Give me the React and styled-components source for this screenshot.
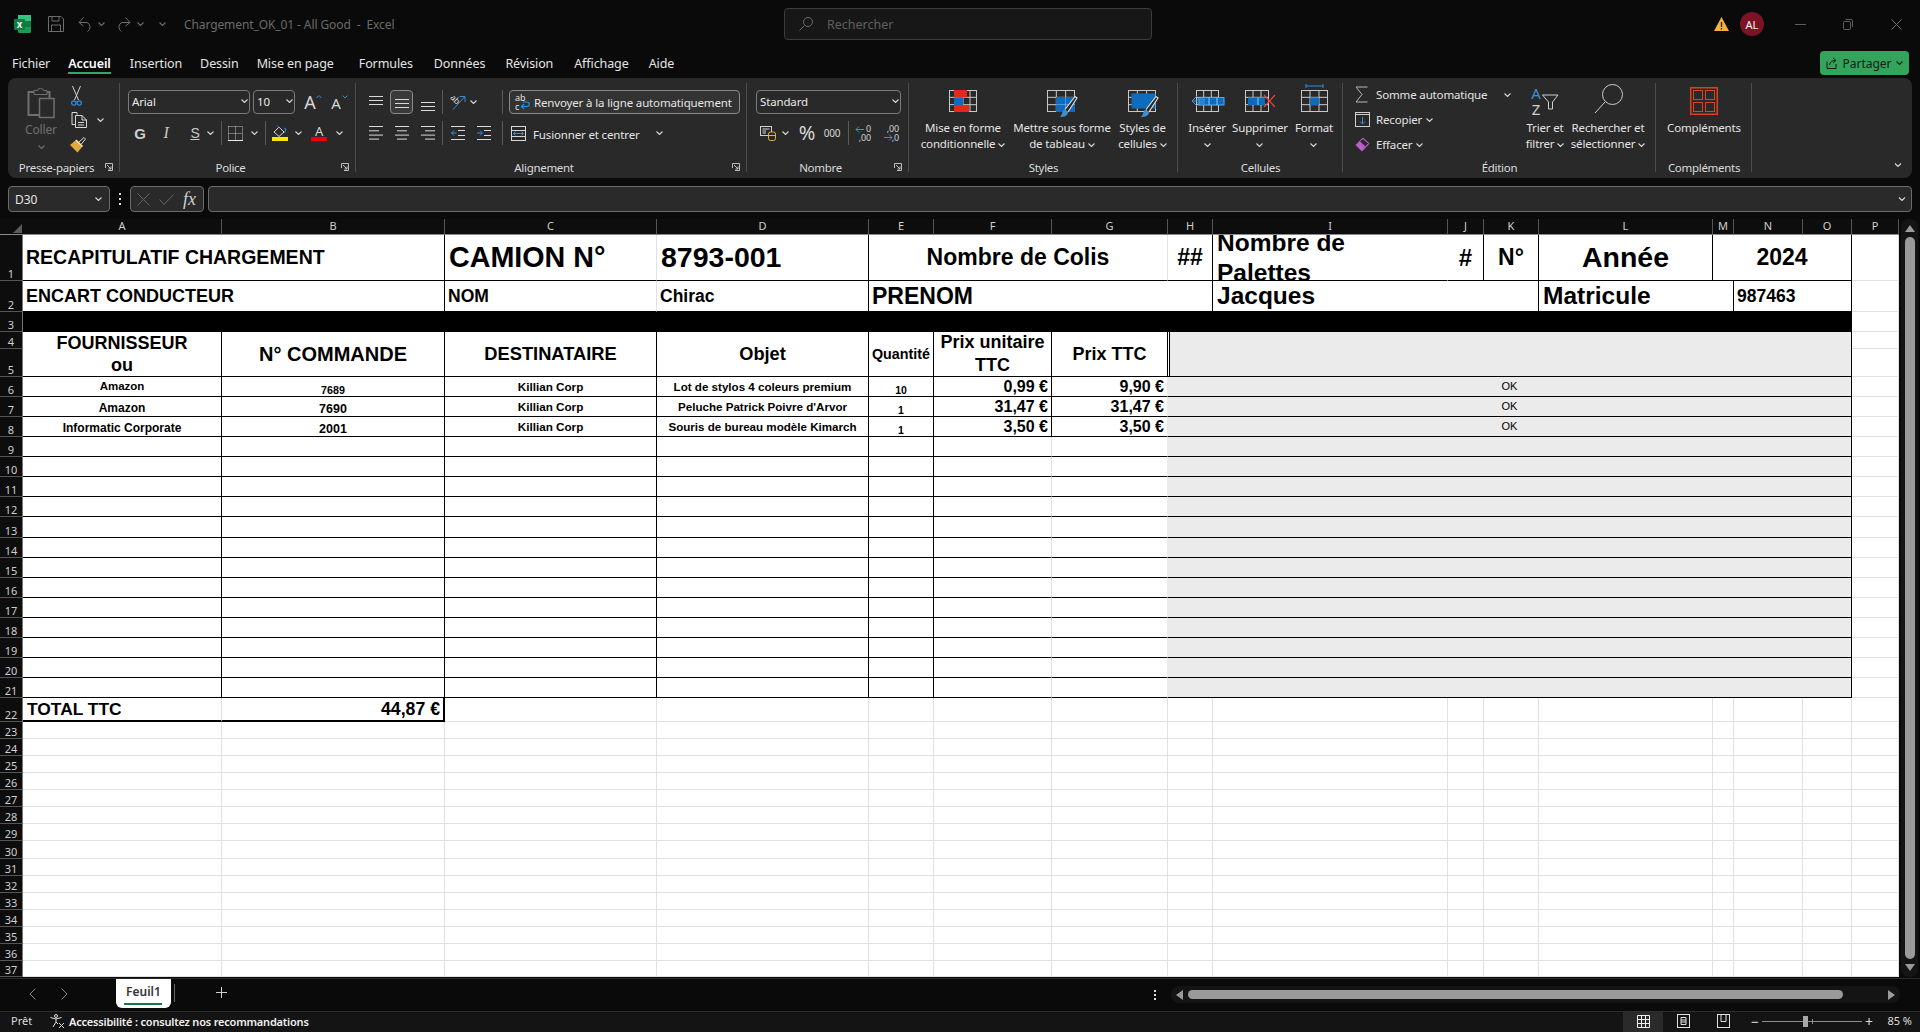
import React from "react";
import styled, { createGlobalStyle } from "styled-components";

const UI = '"Noto Sans", "Open Sans", sans-serif';
const BLACK = "#000";
const LIGHT = "#e1e1e1";
const WHITE = "#fff";
const GREY = "#ebebeb";
const ICON = "#d6d6d6";
const BLUE = "#2f8fe0";
const FILL = "#0f6cbd";

const GlobalStyle = createGlobalStyle`
  html, body { margin: 0; padding: 0; background: #0a0a0a; }
  * { box-sizing: border-box; }
`;

const Page = styled.div`
  position: relative;
  width: 1920px;
  height: 1032px;
  display: flex;
  flex-direction: column;
  overflow: hidden;
  background: #0a0a0a;
  font-family: ${UI};
  color: #e4e4e4;
`;

/* title bar */
const TitleBar = styled.div`
  height: 48px;
  flex: none;
  display: flex;
  align-items: center;
  padding-left: 14px;
`;
const QuickIcon = styled.span`
  width: ${(p) => p.$w}px;
  margin-left: ${(p) => p.$ml || 0}px;
  display: flex;
  justify-content: center;
  align-items: center;
  flex: none;
`;
const DocTitle = styled.span`
  margin-left: 18px;
  width: 600px;
  flex: none;
  font-size: 12px;
  letter-spacing: -0.1px;
  color: #6a6a6a;
  white-space: pre;
`;
const SearchBox = styled.div`
  width: 368px;
  height: 32px;
  flex: none;
  display: flex;
  align-items: center;
  gap: 14px;
  padding-left: 14px;
  background: #171717;
  border: 1px solid #3c3c3c;
  border-radius: 4px;
  font-size: 12.5px;
  color: #5f5f5f;
`;
const TitleRight = styled.div`
  flex: 1;
  display: flex;
  align-items: center;
  justify-content: flex-end;
`;
const Avatar = styled.span`
  width: 24px;
  height: 24px;
  margin: 0 12px 0 11px;
  border-radius: 50%;
  background: #7c1224;
  color: #f4f4f4;
  font-size: 11px;
  display: flex;
  align-items: center;
  justify-content: center;
`;
const WindowBtn = styled.span`
  width: 48px;
  display: flex;
  justify-content: center;
`;

/* menu */
const MenuBar = styled.div`
  height: 30px;
  flex: none;
  display: flex;
  align-items: flex-start;
  padding: 0 12px;
`;
const MenuTab = styled.span`
  position: relative;
  margin-right: ${(p) => p.$mr}px;
  font-size: 12.5px;
  line-height: 31px;
  font-weight: ${(p) => (p.$active ? 600 : 400)};
  letter-spacing: -0.1px;
  color: ${(p) => (p.$active ? "#fff" : "#e4e4e4")};
  ${(p) =>
    p.$active &&
    `&::after { content: ""; position: absolute; left: 0; right: 0; top: 24px; height: 2px; background: #33a866; }`}
`;
const ShareBtn = styled.div`
  margin-left: auto;
  margin-top: 3px;
  margin-right: -1px;
  width: 89px;
  height: 24px;
  display: flex;
  align-items: center;
  justify-content: center;
  gap: 4px;
  background: #34a35c;
  border-radius: 4px;
  color: #102016;
  font-size: 12px;
`;

/* ribbon */
const Ribbon = styled.div`
  height: 100px;
  flex: none;
  margin: 0 8px;
  display: flex;
  background: #292929;
  border-radius: 8px;
  font-size: 11.5px;
  letter-spacing: -0.15px;
`;
const Group = styled.div`
  position: relative;
  width: ${(p) => p.$w}px;
  height: 100px;
  flex: none;
  &::after {
    content: "";
    position: absolute;
    right: 0;
    top: 5px;
    bottom: 6px;
    width: 1px;
    background: #4c4c4c;
  }
`;
const GroupBody = styled.div`
  height: 79px;
  padding-left: ${(p) => p.$pl || 0}px;
  padding-top: ${(p) => p.$pt ?? 12}px;
  display: flex;
  flex-direction: ${(p) => (p.$row ? "row" : "column")};
  gap: ${(p) => (p.$row ? 0 : 7)}px;
`;
const GroupFoot = styled.div`
  height: 20px;
  display: flex;
  align-items: center;
  font-size: 11.5px;
  letter-spacing: -0.3px;
  color: #dcdcdc;
`;
const FootLabel = styled.span`
  flex: 1;
  text-align: center;
`;
const Launcher = styled.span`
  width: 15px;
  flex: none;
  display: flex;
  align-items: center;
`;
const ToolRow = styled.div`
  height: 24px;
  display: flex;
  align-items: center;
`;
const Slot = styled.span`
  width: ${(p) => p.$w}px;
  margin-left: ${(p) => p.$ml || 0}px;
  flex: none;
  height: 24px;
  display: flex;
  align-items: center;
  justify-content: center;
  color: ${ICON};
  ${(p) => p.$boxed && `border: 1px solid #8a8a8a; border-radius: 4px; background: #3a3a3a;`}
`;
const RowSep = styled.span`
  width: 1px;
  height: 24px;
  margin-left: ${(p) => p.$ml || 0}px;
  flex: none;
  background: #5a5a5a;
`;
const Select = styled.div`
  width: ${(p) => p.$w}px;
  height: 24px;
  margin-left: ${(p) => p.$ml || 0}px;
  flex: none;
  display: flex;
  align-items: center;
  justify-content: space-between;
  padding: 0 1px 2px 3px;
  border: 1px solid #7a7a7a;
  border-radius: 4px;
  font-size: 11.5px;
  color: #e8e8e8;
`;
const WrapBtn = styled.div`
  width: 231px;
  height: 24px;
  margin-left: 6px;
  flex: none;
  display: flex;
  align-items: center;
  gap: 4px;
  padding-left: 5px;
  border: 1px solid #8a8a8a;
  border-radius: 4px;
  background: #333;
  font-size: 11.5px;
  white-space: nowrap;
`;
const MergeBtn = styled.div`
  width: 160px;
  height: 24px;
  margin-left: 8px;
  flex: none;
  display: flex;
  align-items: center;
  font-size: 11.5px;
  white-space: nowrap;
`;
const MergeText = styled.span`
  margin-left: 7px;
  margin-top: 2px;
  width: 123px;
  flex: none;
`;
const PasteCol = styled.div`
  width: 58px;
  flex: none;
  display: flex;
  flex-direction: column;
  align-items: center;
  padding-top: 10px;
  color: #6f6f6f;
  font-size: 12px;
`;
const PasteLabel = styled.span`
  margin-top: 4px;
  line-height: 16px;
`;
const PasteChevron = styled.span`
  margin-top: 5px;
  line-height: 6px;
`;
const ClipCol = styled.div`
  display: flex;
  flex-direction: column;
  align-items: flex-start;
  padding-top: 6px;
`;
const ClipRow = styled.div`
  height: 25px;
  display: flex;
  align-items: center;
  gap: 10px;
  padding-left: 1px;
`;
const LargeBtn = styled.div`
  width: ${(p) => p.$w}px;
  flex: none;
  display: flex;
  flex-direction: column;
  align-items: center;
  text-align: center;
`;
const LargeIcon = styled.div`
  height: 42px;
  padding-top: ${(p) => p.$pt ?? 12}px;
  display: flex;
  justify-content: center;
`;
const LargeText = styled.div`
  line-height: 16px;
  white-space: nowrap;
  font-size: 11.5px;
`;
const EditCol = styled.div`
  width: 160px;
  flex: none;
  margin-left: 12px;
  display: flex;
  flex-direction: column;
  padding-top: 4px;
`;
const EditRow = styled.div`
  height: 26px;
  display: flex;
  align-items: center;
  font-size: 11.5px;
`;
const EditIcon = styled.span`
  width: 21px;
  flex: none;
  display: flex;
  align-items: center;
`;
const EditChevron = styled.span`
  margin-left: ${(p) => p.$ml || 4}px;
  display: flex;
`;
const RibbonTail = styled.div`
  flex: 1;
  display: flex;
  align-items: flex-end;
  justify-content: flex-end;
  padding: 0 9px 11px 0;
`;
const GlyphG = styled.span`
  font: bold 15px "Liberation Sans", sans-serif;
  color: #cfcfcf;
`;
const GlyphI = styled.span`
  font: italic 16px "Liberation Serif", serif;
  color: #c8c8c8;
`;
const GlyphS = styled.span`
  font: 14px "Liberation Sans", sans-serif;
  text-decoration: underline;
  color: #c8c8c8;
`;
const GlyphBig = styled.span`
  font-size: ${(p) => p.$s}px;
  font-family: ${UI};
  color: ${ICON};
  line-height: 1;
`;

/* formula bar */
const FormulaRow = styled.div`
  height: 41px;
  flex: none;
  padding: 8px 8px 7px;
  display: flex;
  align-items: stretch;
`;
const NameBox = styled.div`
  width: 102px;
  flex: none;
  display: flex;
  align-items: center;
  justify-content: space-between;
  padding: 0 6px;
  background: #2a2a2a;
  border: 1px solid #6a6a6a;
  border-radius: 4px;
  font-size: 12px;
`;
const Dots = styled.span`
  width: 20px;
  flex: none;
  display: flex;
  align-items: center;
  justify-content: center;
`;
const FxBox = styled.div`
  width: 74px;
  flex: none;
  display: flex;
  align-items: center;
  padding-left: 6px;
  gap: 9px;
  background: #2a2a2a;
  border: 1px solid #6a6a6a;
  border-radius: 4px;
`;
const FxText = styled.span`
  font: italic 18px "Liberation Serif", serif;
  color: #cfcfcf;
`;
const FormulaInput = styled.div`
  flex: 1;
  margin-left: 4px;
  display: flex;
  align-items: center;
  justify-content: flex-end;
  padding-right: 4px;
  background: #2a2a2a;
  border: 1px solid #6a6a6a;
  border-radius: 4px;
`;

/* sheet */
const Workspace = styled.div`
  height: 759px;
  flex: none;
  display: flex;
`;
const Sheet = styled.div`
  width: 1899px;
  height: 759px;
  flex: none;
  display: grid;
  grid-template-columns: 23px 199px 223px 212px 212px 65px 118px 116px 45px 235px 36px 55px 174px 21px 69px 49px 47px;
  grid-template-rows:
    16px 46px 31px 20px 17px 28px 20px 20px 20px
    20px 20px 20px 20px 21px 20px 20px 20px 20px 20px 20px 20px 20px
    24px
    17px 17px 17px 17px 17px 17px 17px 18px 17px 17px 17px 17px 17px 17px 16px;
`;
const Corner = styled.div`
  background: #0d0d0d;
  border-bottom: 1px solid #8a8a8a;
  position: relative;
  &::after {
    content: "";
    position: absolute;
    right: 1px;
    bottom: 1px;
    border-left: 9px solid transparent;
    border-bottom: 9px solid #5a5a5a;
  }
`;
const ColHead = styled.div`
  background: #0d0d0d;
  border-right: 1px solid #555;
  border-bottom: 1px solid #8a8a8a;
  font-size: 11px;
  line-height: 14px;
  text-align: center;
  color: #cfcfcf;
`;
const RowHead = styled.div`
  background: #0d0d0d;
  border-right: 1px solid #777;
  border-bottom: 1px solid #555;
  font-size: 11px;
  line-height: 13px;
  display: flex;
  align-items: flex-end;
  justify-content: center;
  color: #cfcfcf;
`;
const Cell = styled.div`
  grid-column: span ${(p) => p.$cs || 1};
  grid-row: span ${(p) => p.$rs || 1};
  min-width: 0;
  min-height: 0;
  display: flex;
  align-items: ${(p) => p.$v || "center"};
  justify-content: ${(p) => p.$h || "flex-start"};
  padding: 0 ${(p) => p.$px ?? 3}px;
  overflow: hidden;
  background: ${(p) => p.$bg || WHITE};
  border-right: ${(p) => p.$rw || 1}px solid ${(p) => p.$r || LIGHT};
  border-bottom: ${(p) => p.$bw || 1}px solid ${(p) => p.$b || LIGHT};
  font-family: "Liberation Sans", sans-serif;
  font-size: ${(p) => p.$s || 12}px;
  font-weight: ${(p) => (p.$thin ? 400 : 700)};
  line-height: ${(p) => p.$lh || "1.15"};
  text-align: ${(p) => (p.$h === "center" ? "center" : "left")};
  white-space: nowrap;
  color: #000;
`;
const HeaderWall = styled(Cell)`
  box-shadow: inset 1px 0 0 #fff, inset 2px 0 0 #000;
`;
const VScroll = styled.div`
  flex: 1;
  margin: 0 2px 1px;
  padding: 2px 0;
  display: flex;
  flex-direction: column;
  align-items: center;
  background: #141414;
  border-radius: 8px;
`;
const VThumb = styled.div`
  width: 10px;
  flex: 1;
  margin: 5px 0;
  border-radius: 5px;
  background: #9a9a9a;
`;
const ArrowUp = styled.span`
  margin-top: 4px;
  border-left: 5px solid transparent;
  border-right: 5px solid transparent;
  border-bottom: 7px solid #9a9a9a;
`;
const ArrowDown = styled.span`
  margin-bottom: 4px;
  border-left: 5px solid transparent;
  border-right: 5px solid transparent;
  border-top: 7px solid #9a9a9a;
`;

/* tabs */
const TabBar = styled.div`
  height: 33px;
  flex: none;
  display: flex;
  border-top: 1px solid #2a2a2a;
`;
const TabNav = styled.span`
  width: 32px;
  display: flex;
  justify-content: center;
  padding-top: 9px;
  margin-left: ${(p) => p.$ml || 0}px;
`;
const SheetTab = styled.div`
  margin-left: 36px;
  width: 55px;
  height: 29px;
  background: #fff;
  border-radius: 0 0 6px 6px;
  color: #333;
  font: 600 12px/26px ${UI};
  text-align: center;
  position: relative;
  &::after {
    content: "";
    position: absolute;
    left: 8px;
    right: 9px;
    bottom: 3px;
    height: 2px;
    background: #107c41;
  }
`;
const TabSep = styled.span`
  width: 1px;
  height: 18px;
  margin: 5px 0 0 3px;
  background: #666;
`;
const AddTab = styled.span`
  width: 18px;
  margin-left: 41px;
  padding-top: 8px;
`;
const HTrack = styled.div`
  margin-left: auto;
  margin-right: 20px;
  margin-top: 7px;
  width: 729px;
  height: 17px;
  display: flex;
  align-items: center;
  background: #141414;
  border-radius: 8px;
`;
const HThumb = styled.div`
  width: 655px;
  height: 9px;
  margin-left: 5px;
  border-radius: 5px;
  background: #9a9a9a;
`;
const ArrowLeft = styled.span`
  margin-left: 5px;
  border-top: 5px solid transparent;
  border-bottom: 5px solid transparent;
  border-right: 7px solid #9a9a9a;
`;
const ArrowRight = styled.span`
  margin-left: auto;
  margin-right: 5px;
  border-top: 5px solid transparent;
  border-bottom: 5px solid transparent;
  border-left: 7px solid #9a9a9a;
`;
const TabDots = styled.span`
  position: absolute;
  left: 1154px;
  top: 990px;
`;

/* status */
const StatusBar = styled.div`
  height: 22px;
  flex: none;
  display: flex;
  align-items: stretch;
  background: #141414;
  border-top: 1px solid #2e2e2e;
  font-size: 11px;
  color: #dcdcdc;
`;
const Ready = styled.span`
  width: 50px;
  padding-left: 11px;
  line-height: 18px;
`;
const Access = styled.span`
  display: flex;
  align-items: center;
  gap: 4px;
  padding-bottom: 3px;
  font-weight: 600;
  letter-spacing: -0.2px;
  color: #f0f0f0;
`;
const ViewBtn = styled.span`
  width: 40px;
  display: flex;
  align-items: center;
  justify-content: center;
  padding-bottom: 3px;
  background: ${(p) => (p.$on ? "#2a2a2a" : "transparent")};
`;
const StatusRight = styled.div`
  margin-left: auto;
  display: flex;
  align-items: stretch;
`;
const ZoomTrack = styled.div`
  width: 100px;
  position: relative;
  align-self: center;
  margin-bottom: 3px;
  height: 1px;
  background: #8c8c8c;
  &::after {
    content: "";
    position: absolute;
    left: 50px;
    top: -2px;
    width: 1px;
    height: 5px;
    background: #8c8c8c;
  }
`;
const ZoomKnob = styled.span`
  position: absolute;
  left: 41px;
  top: -5px;
  width: 5px;
  height: 11px;
  background: #a8a8a8;
`;
const ZoomSign = styled.span`
  width: 14px;
  margin-left: ${(p) => p.$ml || 0}px;
  padding-bottom: 3px;
  display: flex;
  align-items: center;
  justify-content: center;
  font-size: 14px;
`;
const ZoomPct = styled.span`
  width: 44px;
  padding-right: 8px;
  line-height: 18px;
  text-align: right;
`;

/* icons */
const Svg = ({ w, h, children, style }) => (
  <svg width={w} height={h} viewBox={`0 0 ${w} ${h}`} fill="none" style={{ overflow: "visible", display: "block", ...style }}>
    {children}
  </svg>
);
const Chevron = ({ c = "#d8d8d8", w = 7 }) => (
  <svg width={w} height={4} viewBox="0 0 7 4" fill="none" style={{ display: "inline-block", verticalAlign: "middle" }}>
    <path d="M.5.5 3.5 3.5 6.5.5" stroke={c} strokeWidth="1.1" />
  </svg>
);
const LauncherIcon = () => (
  <Svg w={8} h={8}>
    <path d="M.5 5V.5H7.5V7.5H3" stroke="#bdbdbd" />
    <path d="M2 2 6 6M6 3.5V6H3.5" stroke="#bdbdbd" />
  </Svg>
);
const ExcelLogo = () => (
  <Svg w={17} h={20}>
    <rect x="4" y="1" width="13" height="18" rx="1.5" fill="#1f9a55" />
    <rect x="4" y="1" width="13" height="6" fill="#33c481" />
    <rect x="10" y="7" width="7" height="6" fill="#107c41" />
    <rect y="5" width="11" height="11" rx="1" fill="#107c41" />
    <text x="5.5" y="14" textAnchor="middle" fontSize="10" fontWeight="700" fontFamily="Liberation Sans" fill="#fff">x</text>
  </Svg>
);
const SaveIcon = () => (
  <Svg w={16} h={16}>
    <path d="M.5.5H13L15.5 3V15.5H.5Z M4 .5V5H11V.5 M3.5 15.5V9H12.5V15.5" stroke="#6c6c6c" />
  </Svg>
);
const UndoIcon = ({ flip }) => (
  <Svg w={15} h={16} style={flip ? { transform: "scaleX(-1)" } : undefined}>
    <path d="M1 6.5H9A5 5 0 0 1 9.5 15.5M1 6.5 5.5 1.5M1 6.5 5.5 10" stroke="#6c6c6c" />
  </Svg>
);
const MagnifierSmall = () => (
  <Svg w={14} h={14}>
    <circle cx="9" cy="5" r="4.5" stroke="#6c6c6c" />
    <path d="M5.5 8.5.5 13.5" stroke="#6c6c6c" />
  </Svg>
);
const Warn = () => (
  <Svg w={15} h={14}>
    <path d="M7.5 0 15 14H0Z" fill="#f5b23c" />
    <path d="M7.5 5V10M7.5 11V12.5" stroke="#222" strokeWidth="1.3" />
  </Svg>
);
const Minimize = () => <Svg w={11} h={1}><path d="M0 .5H11" stroke="#5e5e5e" /></Svg>;
const Restore = () => (
  <Svg w={10} h={11}>
    <rect x=".5" y="2.5" width="7" height="8" rx="1" stroke="#5e5e5e" />
    <path d="M2.5.5H8A1.5 1.5 0 0 1 9.5 2V8" stroke="#5e5e5e" />
  </Svg>
);
const CloseX = () => <Svg w={11} h={11}><path d="M.5.5 10.5 10.5M10.5.5.5 10.5" stroke="#6e6e6e" /></Svg>;
const ShareIcon = () => (
  <Svg w={12} h={12}>
    <path d="M1 4.5V11.5H10V7" stroke="#102016" />
    <path d="M3.5 8C4 5 6 3.5 9 3.5M7 .8 10 3.5 7 6" stroke="#102016" />
  </Svg>
);
const Clipboard = () => (
  <Svg w={28} h={30}>
    <path d="M7 4H1.5V27H12M20 4H22.5V10" stroke="#6f6f6f" strokeWidth="2" />
    <path d="M7 5V2.5H10.5A3 2 0 0 1 16.5 2.5H20V6.5H7Z" stroke="#6f6f6f" />
    <rect x="12.5" y="10.5" width="14.5" height="19" stroke="#6f6f6f" strokeWidth="1.5" />
  </Svg>
);
const Scissors = () => (
  <Svg w={11} h={21}>
    <path d="M1.5 0 7.5 14M9.5 0 3.5 14" stroke="#d4d4d4" />
    <circle cx="2.8" cy="17" r="2.2" stroke={BLUE} strokeWidth="1.2" />
    <circle cx="8.2" cy="17" r="2.2" stroke={BLUE} strokeWidth="1.2" />
  </Svg>
);
const CopyIcon = () => (
  <Svg w={16} h={16}>
    <path d="M6 2.5V.5H1V12.5H4" stroke="#d9d9d9" />
    <path d="M4.5 3.5H11L15.5 8V15.5H4.5Z M11 3.5V8H15.5 M7 10.5H13M7 13H13" stroke="#d9d9d9" />
  </Svg>
);
const Brush = () => (
  <Svg w={17} h={16} style={{ marginLeft: -2 }}>
    <path d="M10 5 15 .5 16.5 2 12 7.5" stroke="#d8d8d8" />
    <path d="M1 8 7 3 13.5 9.5 8.5 15.5Z" fill="#e5a83c" />
    <path d="M7 3 13.5 9.5" stroke="#f4e2b8" strokeWidth="1.5" />
  </Svg>
);
const FontSize = ({ up }) => (
  <Svg w={18} h={16}>
    <text x="6" y="15" textAnchor="middle" fontSize={up ? 18 : 15} fontFamily="Noto Sans" fill={ICON}>A</text>
    <path d={up ? "M12.5 4 15 1.5 17.5 4" : "M12.5 1.5 15 4 17.5 1.5"} stroke={BLUE} />
  </Svg>
);
const BorderIcon = () => (
  <Svg w={15} h={15}>
    <path d="M.5.5H14.5V14.5M.5.5V14.5M7.5.5V14.5M.5 7.5H14.5" stroke="#c0c0c0" strokeDasharray="1 1" />
    <path d="M0 14.5H15" stroke="#e8e8e8" />
  </Svg>
);
const FillIcon = () => (
  <Svg w={17} h={16}>
    <path d="M2 7 7 2 12 7 7 11.5Z" stroke="#d8d8d8" />
    <path d="M5 .5 8 3.5M12.5 8 14 4 12 3" stroke={BLUE} />
    <rect y="12" width="16" height="4" fill="#ffe600" />
  </Svg>
);
const FontColor = () => (
  <Svg w={16} h={16}>
    <text x="8" y="11" textAnchor="middle" fontSize="13" fontFamily="Noto Sans" fill={ICON}>A</text>
    <rect y="12" width="16" height="4" fill="#f00000" />
  </Svg>
);
const Lines = ({ align, v }) => {
  const rows = v ? [0, 4, 8] : [0, 4.3, 8.6, 12.6];
  const shift = { top: 1, middle: 4, bottom: 7 }[v] ?? 0;
  const w = (i) => (v ? 14 : i % 2 ? 10 : 14);
  const x = (i) => (align === "center" ? (14 - w(i)) / 2 : align === "right" ? 14 - w(i) : 0);
  return (
    <Svg w={14} h={14}>
      {rows.map((y, i) => (
        <path key={i} d={`M${x(i)} ${y + shift + 0.5}H${x(i) + w(i)}`} stroke="#d9d9d9" />
      ))}
    </Svg>
  );
};
const Orientation = () => (
  <Svg w={17} h={17}>
    <text x="5" y="9" fontSize="8.5" fontFamily="Noto Sans" fill="#d8d8d8" textAnchor="middle" transform="rotate(45 6 6)">ab</text>
    <path d="M3 15.5 14.5 3M9.5 2.5H15V8" stroke={BLUE} />
  </Svg>
);
const Indent = ({ dec }) => (
  <Svg w={14} h={14}>
    <path d="M0 .5H14M0 13.5H14M7 4.5H14M7 9.5H14" stroke="#d9d9d9" />
    {dec ? (
      <path d="M5.5 7H.5M3 4.5.5 7 3 9.5" stroke={BLUE} />
    ) : (
      <path d="M0 7H5M3 4.5 5.5 7 3 9.5" stroke={BLUE} />
    )}
  </Svg>
);
const WrapIcon = () => (
  <Svg w={15} h={17}>
    <text x="0" y="7" fontSize="9" fontFamily="Noto Sans" fill="#e0e0e0">ab</text>
    <text x="0" y="16" fontSize="9" fontFamily="Noto Sans" fill="#e0e0e0">c</text>
    <path d="M7 12.5H12A2.2 2.2 0 0 0 12 8H8M9 15 6.5 12.5 9 10" stroke={BLUE} strokeWidth="1.2" />
  </Svg>
);
const MergeIcon = () => (
  <Svg w={15} h={15}>
    <rect x=".5" y=".5" width="14" height="14" stroke="#d8d8d8" />
    <path d="M.5 4.5H14.5M.5 10.5H14.5" stroke="#d8d8d8" />
    <path d="M2.5 7.5H12.5M4.5 5.5 2.5 7.5 4.5 9.5M10.5 5.5 12.5 7.5 10.5 9.5" stroke={BLUE} />
  </Svg>
);
const Accounting = () => (
  <Svg w={16} h={15}>
    <rect x=".5" y=".5" width="11" height="9" stroke="#d0d0d0" />
    <path d="M2.5 3H9.5M2.5 5H6M2.5 7H6" stroke="#d0d0d0" />
    <rect x="8.5" y="6" width="7" height="8.5" rx="2" fill="#292929" stroke="#e8b23c" />
    <path d="M8.5 9.5H15.5" stroke="#e8b23c" />
  </Svg>
);
const Decimal = ({ more }) => (
  <Svg w={17} h={17}>
    <text x="16" y="7" textAnchor="end" fontSize="9" fontFamily="Noto Sans" fill="#cfcfcf">{more ? ",00" : "0"}</text>
    <text x="16" y="16" textAnchor="end" fontSize="9" fontFamily="Noto Sans" fill="#cfcfcf">{more ? ",0" : ",00"}</text>
    {more ? (
      <path d="M1 12.5H9M6 9.5 9 12.5 6 15.5" stroke={BLUE} />
    ) : (
      <path d="M1 4.5H9M4 1.5 1 4.5 4 7.5" stroke={BLUE} />
    )}
  </Svg>
);
const GridLines = ({ x = 0, y = 0, w = 28, h = 22, cols = 3, c = "#c8c8c8" }) => (
  <g stroke={c}>
    <rect x={x + 0.5} y={y + 0.5} width={w - 1} height={h - 1} />
    {[...Array(cols - 1)].map((_, i) => (
      <path key={i} d={`M${x + ((i + 1) * w) / cols} ${y}V${y + h}`} />
    ))}
    <path d={`M${x} ${y + h / 3}H${x + w}M${x} ${y + (2 * h) / 3}H${x + w}`} />
  </g>
);
const CondFormat = () => (
  <Svg w={28} h={22}>
    <GridLines cols={4} />
    <rect x="5" width="13" height="7.5" fill="#e02a1c" />
    <rect x="5" y="7.5" width="9" height="7.5" fill={FILL} />
    <rect x="5" y="15" width="15" height="7" fill="#e02a1c" />
  </Svg>
);
const BrushOverlay = () => (
  <g>
    <path d="M21 22 30 8 28 6.5 18 19.5" fill="#292929" stroke="#dcdcdc" strokeWidth="1.2" />
    <path d="M13 27C17 27 21 26 21 22L18 19.5C15 20 15.5 25 13 27Z" fill="#3f8fd6" />
  </g>
);
const TableFormat = () => (
  <Svg w={30} h={28}>
    <GridLines cols={3} />
    <rect x="9" y="7" width="19" height="15" fill={FILL} />
    <path d="M18.5 7V22M9 14.5H28" stroke="#7ab6ea" strokeWidth=".6" />
    <BrushOverlay />
  </Svg>
);
const CellStyles = () => (
  <Svg w={30} h={28}>
    <GridLines cols={3} />
    <rect x="3.5" y="3.5" width="24" height="15" fill={FILL} />
    <BrushOverlay />
  </Svg>
);
const InsertIcon = () => (
  <Svg w={33} h={22}>
    <GridLines x={5} w={23} h={22} />
    <rect x="8" y="7.5" width="25" height="7.5" fill={FILL} stroke="#5aa7e6" />
    <path d="M14 11H1M6 6 1 11 6 16M14 9H6M14 13H6" stroke="#3b9be8" />
    <path d="M18 7.5V15M26 7.5V15" stroke="#8cc4f0" />
  </Svg>
);
const DeleteIcon = () => (
  <Svg w={30} h={22}>
    <GridLines w={24} h={22} />
    <rect x="3" y="7.5" width="17" height="7.5" fill={FILL} />
    <path d="M13 7.5V15" stroke="#8cc4f0" />
    <path d="M19 5 30 17M30 5 19 17" stroke="#e8443a" strokeWidth="1.2" />
  </Svg>
);
const FormatIcon = () => (
  <Svg w={27} h={22}>
    <path d="M5 -4H22M5 -6V-2M22 -6V-2" stroke={BLUE} />
    <GridLines cols={3} w={27} />
    <rect x="9" y="7.5" width="9" height="7.5" fill={FILL} />
  </Svg>
);
const Sigma = () => (
  <Svg w={13} h={17}>
    <path d="M12.5 1H1L7 8.5 1 16H12.5" stroke="#b8b8b8" />
  </Svg>
);
const FillDown = () => (
  <Svg w={15} h={15}>
    <rect x=".5" y=".5" width="14" height="14" stroke="#cfcfcf" />
    <path d="M.5 2.5H14.5" stroke="#cfcfcf" />
    <path d="M7.5 5V12M5 9.5 7.5 12 10 9.5" stroke={BLUE} />
  </Svg>
);
const Eraser = () => (
  <Svg w={15} h={15}>
    <path d="M.5 8 8 .5 14.5 6.5 7 14.5Z" fill="#b85fc8" />
    <path d="M8 1.5 13.5 6.5 10.5 10 4.5 4.5Z" fill="#292929" stroke="#b85fc8" />
  </Svg>
);
const SortIcon = () => (
  <Svg w={30} h={31}>
    <text x="6" y="14" textAnchor="middle" fontSize="15" fontFamily="Noto Sans" fill="#3f8fd6">A</text>
    <text x="6" y="30" textAnchor="middle" fontSize="15" fontFamily="Noto Sans" fill="#cfcfcf">Z</text>
    <path d="M12.5 10H28L22.5 17V24H18.5V17Z" stroke="#cfcfcf" />
  </Svg>
);
const SearchBig = () => (
  <Svg w={29} h={30}>
    <circle cx="18.5" cy="10.5" r="10" stroke="#cfcfcf" />
    <path d="M11 18 1 29" stroke="#cfcfcf" />
  </Svg>
);
const AddIns = () => (
  <Svg w={28} h={28}>
    <rect x=".75" y=".75" width="26.5" height="26.5" stroke="#d8431b" strokeWidth="1.5" />
    <g stroke="#d8431b">
      <rect x="3.5" y="3.5" width="9" height="9" />
      <rect x="15.5" y="3.5" width="9" height="9" />
      <rect x="3.5" y="15.5" width="9" height="9" />
      <rect x="15.5" y="15.5" width="9" height="9" />
    </g>
  </Svg>
);
const AccessIcon = () => (
  <Svg w={15} h={14}>
    <circle cx="6" cy="2" r="1.5" stroke="#e0e0e0" />
    <path d="M.5 3.5 6 5 11.5 3.5M6 5V8L3 13M6 8 8 10" stroke="#e0e0e0" />
    <path d="M9 9 14 14M14 9 9 14" stroke="#e0e0e0" />
  </Svg>
);
const NormalView = () => (
  <Svg w={13} h={13}>
    <path d="M.5.5H12.5V12.5H.5ZM.5 4.5H12.5M.5 8.5H12.5M4.5.5V12.5M8.5.5V12.5" stroke="#f0f0f0" />
  </Svg>
);
const PageView = () => (
  <Svg w={13} h={14}>
    <rect x=".5" y=".5" width="12" height="13" stroke="#e0e0e0" />
    <path d="M4 3.5H9V10.5H4ZM4 6H9M4 8H9" stroke="#e0e0e0" />
  </Svg>
);
const BreakView = () => (
  <Svg w={13} h={14}>
    <rect x=".5" y=".5" width="12" height="13" stroke="#e0e0e0" />
    <path d="M4 .5V7.5H9V.5" stroke="#e0e0e0" />
  </Svg>
);

const COLS = ["A", "B", "C", "D", "E", "F", "G", "H", "I", "J", "K", "L", "M", "N", "O", "P"];
const ITEMS = [
  ["Amazon", "7689", "Killian Corp", "Lot de stylos 4 coleurs premium", "10", "0,99 €", "9,90 €"],
  ["Amazon", "7690", "Killian Corp", "Peluche Patrick Poivre d'Arvor", "1", "31,47 €", "31,47 €"],
  ["Informatic Corporate", "2001", "Killian Corp", "Souris de bureau modèle Kimarch", "1", "3,50 €", "3,50 €"],
];
const MENU = [
  ["Fichier", 18], ["Accueil", 19], ["Insertion", 18], ["Dessin", 18], ["Mise en page", 25],
  ["Formules", 21], ["Données", 20], ["Révision", 21], ["Affichage", 20], ["Aide", 0],
];

const Foot = ({ label, launcher }) => (
  <GroupFoot>
    <FootLabel>{label}</FootLabel>
    {launcher && <Launcher><LauncherIcon /></Launcher>}
  </GroupFoot>
);

const Large = ({ w, icon, pt, lines }) => (
  <LargeBtn $w={w}>
    <LargeIcon $pt={pt}>{icon}</LargeIcon>
    <LargeText>
      {lines[0]}
      <br />
      {lines[1]} <Chevron />
    </LargeText>
  </LargeBtn>
);

function HeaderRows() {
  return (
    <>
      <RowHead>1</RowHead>
      <Cell $cs={2} $r={BLACK} $b={BLACK} $s={19.5}>RECAPITULATIF CHARGEMENT</Cell>
      <Cell $b={BLACK} $s={28.7} $px={4}>CAMION N°</Cell>
      <Cell $r={BLACK} $b={BLACK} $s={28.5} $px={4}>8793-001</Cell>
      <Cell $cs={3} $b={BLACK} $h="center" $s={23}>Nombre de Colis</Cell>
      <Cell $r={BLACK} $b={BLACK} $h="center" $s={23} $px={0}>##</Cell>
      <Cell $r={WHITE} $b={BLACK} $s={24.5} $lh="30px" $px={4}>Nombre de<br />Palettes</Cell>
      <Cell $r={BLACK} $b={BLACK} $h="center" $s={24}>#</Cell>
      <Cell $r={BLACK} $b={BLACK} $h="center" $s={23}>N°</Cell>
      <Cell $r={BLACK} $b={BLACK} $h="center" $s={28.5}>Année</Cell>
      <Cell $cs={3} $r={BLACK} $b={BLACK} $h="center" $s={23}>2024</Cell>
      <Cell />

      <RowHead>2</RowHead>
      <Cell $cs={2} $r={BLACK} $b={BLACK} $s={18} $v="center">ENCART CONDUCTEUR</Cell>
      <Cell $b={BLACK} $s={17.5}>NOM</Cell>
      <Cell $r={BLACK} $b={BLACK} $s={17.5}>Chirac</Cell>
      <Cell $cs={4} $r={BLACK} $b={BLACK} $s={23}>PRENOM</Cell>
      <Cell $cs={3} $r={BLACK} $b={BLACK} $s={24.5} $px={4}>Jacques</Cell>
      <Cell $cs={2} $r={BLACK} $b={BLACK} $s={24.5} $px={4}>Matricule</Cell>
      <Cell $cs={2} $r={BLACK} $b={BLACK} $s={17.5}>987463</Cell>
      <Cell />

      <RowHead>3</RowHead>
      <Cell $cs={15} $bg={BLACK} $r={BLACK} $b={BLACK} />
      <Cell />

      <RowHead>4</RowHead>
      <Cell $rs={2} $r={BLACK} $b={BLACK} $h="center" $s={18} $lh="22px" $v="flex-start" $px={0}>FOURNISSEUR<br />ou</Cell>
      <Cell $rs={2} $r={BLACK} $b={BLACK} $h="center" $s={20}>N° COMMANDE</Cell>
      <Cell $rs={2} $r={BLACK} $b={BLACK} $h="center" $s={18.3}>DESTINATAIRE</Cell>
      <Cell $rs={2} $r={BLACK} $b={BLACK} $h="center" $s={18.2}>Objet</Cell>
      <Cell $rs={2} $r={BLACK} $b={BLACK} $h="center" $s={14.3} $px={0}>Quantité</Cell>
      <Cell $rs={2} $r={BLACK} $b={BLACK} $h="center" $s={18} $lh="23px" $px={0}>Prix unitaire<br />TTC</Cell>
      <Cell $rs={2} $r={BLACK} $b={BLACK} $h="center" $s={18}>Prix TTC</Cell>
      <HeaderWall $cs={8} $rs={2} $bg={GREY} $r={BLACK} $b={BLACK} />
      <Cell />
      <RowHead>5</RowHead>
      <Cell />
    </>
  );
}

function ItemRows() {
  return ITEMS.map((row, i) => (
    <React.Fragment key={i}>
      <RowHead>{6 + i}</RowHead>
      <Cell $r={BLACK} $b={BLACK} $h="center" $s={i === 0 ? 11.5 : 12} $v={i === 0 ? "center" : "flex-end"} $px={0}>{row[0]}</Cell>
      <Cell $r={BLACK} $b={BLACK} $h="center" $s={i === 0 ? 10.7 : 12.5} $v="flex-end">{row[1]}</Cell>
      <Cell $r={BLACK} $b={BLACK} $h="center" $s={11.7}>{row[2]}</Cell>
      <Cell $r={BLACK} $b={BLACK} $h="center" $s={11.6} $px={0}>{row[3]}</Cell>
      <Cell $r={BLACK} $b={BLACK} $h="center" $s={10.5} $v="flex-end">{row[4]}</Cell>
      <Cell $r={BLACK} $b={BLACK} $h="flex-end" $v="flex-end" $s={16}>{row[5]}</Cell>
      <Cell $r={GREY} $b={BLACK} $h="flex-end" $v="flex-end" $s={16}>{row[6]}</Cell>
      <Cell $cs={8} $bg={GREY} $r={BLACK} $b={BLACK} $h="center" $s={11} $thin>OK</Cell>
      <Cell />
    </React.Fragment>
  ));
}

function EmptyRows() {
  return [...Array(13)].map((_, i) => (
    <React.Fragment key={i}>
      <RowHead>{9 + i}</RowHead>
      {[...Array(5)].map((_, c) => <Cell key={c} $r={BLACK} $b={BLACK} />)}
      <Cell $b={BLACK} />
      <Cell $b={BLACK} $r={GREY} />
      <Cell $cs={8} $bg={GREY} $r={BLACK} $b={BLACK} />
      <Cell />
    </React.Fragment>
  ));
}

function TailRows() {
  return (
    <>
      <RowHead>22</RowHead>
      <Cell $bw={2} $b={BLACK} $s={17.4} $px={4}>TOTAL TTC</Cell>
      <Cell $bw={2} $b={BLACK} $rw={2} $r={BLACK} $h="flex-end" $s={17.7}>44,87 €</Cell>
      {COLS.slice(2).map((c) => <Cell key={c} />)}
      {[...Array(15)].map((_, i) => (
        <React.Fragment key={i}>
          <RowHead>{23 + i}</RowHead>
          {COLS.map((c) => <Cell key={c} />)}
        </React.Fragment>
      ))}
    </>
  );
}

export default function App() {
  return (
    <Page>
      <GlobalStyle />
      <TitleBar>
        <ExcelLogo />
        <QuickIcon $w={16} $ml={17}><SaveIcon /></QuickIcon>
        <QuickIcon $w={16} $ml={13}><UndoIcon /></QuickIcon>
        <QuickIcon $w={8} $ml={4}><Chevron c="#6c6c6c" /></QuickIcon>
        <QuickIcon $w={16} $ml={10}><UndoIcon flip /></QuickIcon>
        <QuickIcon $w={8} $ml={5}><Chevron c="#6c6c6c" /></QuickIcon>
        <QuickIcon $w={8} $ml={14}><Chevron c="#6c6c6c" /></QuickIcon>
        <DocTitle>Chargement_OK_01 - All Good  -  Excel</DocTitle>
        <SearchBox><MagnifierSmall />Rechercher</SearchBox>
        <TitleRight>
          <Warn />
          <Avatar>AL</Avatar>
          <WindowBtn><Minimize /></WindowBtn>
          <WindowBtn><Restore /></WindowBtn>
          <WindowBtn><CloseX /></WindowBtn>
        </TitleRight>
      </TitleBar>

      <MenuBar>
        {MENU.map(([name, mr]) => (
          <MenuTab key={name} $mr={mr} $active={name === "Accueil"}>{name}</MenuTab>
        ))}
        <ShareBtn><ShareIcon />Partager <Chevron c="#102016" /></ShareBtn>
      </MenuBar>

      <Ribbon>
        <Group $w={112}>
          <GroupBody $row $pl={4} $pt={0}>
            <PasteCol>
              <Clipboard />
              <PasteLabel>Coller</PasteLabel>
              <PasteChevron><Chevron c="#6f6f6f" /></PasteChevron>
            </PasteCol>
            <ClipCol>
              <ClipRow><Scissors /></ClipRow>
              <ClipRow><CopyIcon /><Chevron /></ClipRow>
              <ClipRow><Brush /></ClipRow>
            </ClipCol>
          </GroupBody>
          <Foot label="Presse-papiers" launcher />
        </Group>

        <Group $w={236}>
          <GroupBody $pl={8}>
            <ToolRow>
              <Select $w={122}>Arial <Chevron /></Select>
              <Select $w={42} $ml={3}>10 <Chevron /></Select>
              <Slot $w={26} $ml={5}><FontSize up /></Slot>
              <Slot $w={26}><FontSize /></Slot>
            </ToolRow>
            <ToolRow>
              <Slot $w={24}><GlyphG>G</GlyphG></Slot>
              <Slot $w={28}><GlyphI>I</GlyphI></Slot>
              <Slot $w={20} $ml={5}><GlyphS>S</GlyphS></Slot>
              <Slot $w={10}><Chevron /></Slot>
              <RowSep $ml={6} />
              <Slot $w={22} $ml={2}><BorderIcon /></Slot>
              <Slot $w={16}><Chevron /></Slot>
              <RowSep $ml={3} />
              <Slot $w={24} $ml={2}><FillIcon /></Slot>
              <Slot $w={12}><Chevron /></Slot>
              <Slot $w={30}><FontColor /></Slot>
              <Slot $w={10}><Chevron /></Slot>
            </ToolRow>
          </GroupBody>
          <Foot label="Police" launcher />
        </Group>

        <Group $w={391}>
          <GroupBody $pl={10}>
            <ToolRow>
              <Slot $w={20}><Lines v="top" /></Slot>
              <Slot $w={23} $ml={4} $boxed><Lines v="middle" /></Slot>
              <Slot $w={20} $ml={5}><Lines v="bottom" /></Slot>
              <RowSep $ml={4} />
              <Slot $w={20} $ml={5}><Orientation /></Slot>
              <Slot $w={10}><Chevron /></Slot>
              <RowSep $ml={24} />
              <WrapBtn><WrapIcon />Renvoyer à la ligne automatiquement</WrapBtn>
            </ToolRow>
            <ToolRow>
              <Slot $w={20}><Lines align="left" /></Slot>
              <Slot $w={20} $ml={6}><Lines align="center" /></Slot>
              <Slot $w={20} $ml={6}><Lines align="right" /></Slot>
              <RowSep $ml={4} />
              <Slot $w={20} $ml={5}><Indent dec /></Slot>
              <Slot $w={20} $ml={6}><Indent /></Slot>
              <RowSep $ml={8} />
              <MergeBtn><MergeIcon /><MergeText>Fusionner et centrer</MergeText><Chevron /></MergeBtn>
            </ToolRow>
          </GroupBody>
          <Foot label="Alignement" launcher />
        </Group>

        <Group $w={162}>
          <GroupBody $pl={9}>
            <ToolRow><Select $w={145}>Standard <Chevron /></Select></ToolRow>
            <ToolRow>
              <Slot $w={24}><Accounting /></Slot>
              <Slot $w={10}><Chevron /></Slot>
              <Slot $w={24} $ml={5}><GlyphBig $s={20}>%</GlyphBig></Slot>
              <Slot $w={26}><GlyphBig $s={10}>000</GlyphBig></Slot>
              <RowSep $ml={3} />
              <Slot $w={24} $ml={2}><Decimal /></Slot>
              <Slot $w={24} $ml={4}><Decimal more /></Slot>
            </ToolRow>
          </GroupBody>
          <Foot label="Nombre" launcher />
        </Group>

        <Group $w={269}>
          <GroupBody $row $pl={8} $pt={0}>
            <Large w={92} icon={<CondFormat />} lines={["Mise en forme", "conditionnelle"]} />
            <Large w={106} icon={<TableFormat />} lines={["Mettre sous forme", "de tableau"]} />
            <Large w={55} icon={<CellStyles />} lines={["Styles de", "cellules"]} />
          </GroupBody>
          <Foot label="Styles" />
        </Group>

        <Group $w={165}>
          <GroupBody $row $pl={8} $pt={0}>
            <Large w={42} icon={<InsertIcon />} lines={["Insérer", ""]} />
            <Large w={64} icon={<DeleteIcon />} lines={["Supprimer", ""]} />
            <Large w={44} icon={<FormatIcon />} lines={["Format", ""]} />
          </GroupBody>
          <Foot label="Cellules" />
        </Group>

        <Group $w={313}>
          <GroupBody $row $pt={0}>
            <EditCol>
              <EditRow>
                <EditIcon><Sigma /></EditIcon>Somme automatique<EditChevron $ml={17}><Chevron /></EditChevron>
              </EditRow>
              <EditRow>
                <EditIcon><FillDown /></EditIcon>Recopier<EditChevron><Chevron /></EditChevron>
              </EditRow>
              <EditRow>
                <EditIcon><Eraser /></EditIcon>Effacer<EditChevron><Chevron /></EditChevron>
              </EditRow>
            </EditCol>
            <Large w={60} pt={7} icon={<SortIcon />} lines={["Trier et", "filtrer"]} />
            <Large w={66} pt={6} icon={<SearchBig />} lines={["Rechercher et", "sélectionner"]} />
          </GroupBody>
          <Foot label="Édition" />
        </Group>

        <Group $w={96}>
          <GroupBody $row $pt={0}>
            <LargeBtn $w={96}>
              <LargeIcon $pt={9}><AddIns /></LargeIcon>
              <LargeText>Compléments</LargeText>
            </LargeBtn>
          </GroupBody>
          <Foot label="Compléments" />
        </Group>

        <RibbonTail><Chevron w={10} /></RibbonTail>
      </Ribbon>

      <FormulaRow>
        <NameBox>D30 <Chevron w={9} /></NameBox>
        <Dots>
          <Svg w={2} h={12}><path d="M1 0V2M1 5V7M1 10V12" stroke="#dcdcdc" strokeWidth="2" /></Svg>
        </Dots>
        <FxBox>
          <Svg w={13} h={13}><path d="M.5.5 12.5 12.5M12.5.5.5 12.5" stroke="#666" /></Svg>
          <Svg w={15} h={11}><path d="M.5 5.5 5 10.5 14.5.5" stroke="#666" /></Svg>
          <FxText>fx</FxText>
        </FxBox>
        <FormulaInput><Chevron w={10} /></FormulaInput>
      </FormulaRow>

      <Workspace>
        <Sheet>
          <Corner />
          {COLS.map((c) => <ColHead key={c}>{c}</ColHead>)}
          <HeaderRows />
          <ItemRows />
          <EmptyRows />
          <TailRows />
        </Sheet>
        <VScroll>
          <ArrowUp />
          <VThumb />
          <ArrowDown />
        </VScroll>
      </Workspace>

      <TabBar>
        <TabNav $ml={16}><Svg w={7} h={12}><path d="M6.5.5 1 6 6.5 11.5" stroke="#888" /></Svg></TabNav>
        <TabNav><Svg w={7} h={12}><path d="M.5.5 6 6 .5 11.5" stroke="#888" /></Svg></TabNav>
        <SheetTab>Feuil1</SheetTab>
        <TabSep />
        <AddTab><Svg w={11} h={11}><path d="M5.5 0V11M0 5.5H11" stroke="#d0d0d0" /></Svg></AddTab>
        <TabDots><Svg w={2} h={10}><path d="M1 0V2M1 4V6M1 8V10" stroke="#dcdcdc" strokeWidth="2" /></Svg></TabDots>
        <HTrack>
          <ArrowLeft />
          <HThumb />
          <ArrowRight />
        </HTrack>
      </TabBar>

      <StatusBar>
        <Ready>Prêt</Ready>
        <Access><AccessIcon />Accessibilité : consultez nos recommandations</Access>
        <StatusRight>
          <ViewBtn $on><NormalView /></ViewBtn>
          <ViewBtn><PageView /></ViewBtn>
          <ViewBtn><BreakView /></ViewBtn>
          <ZoomSign $ml={5}>−</ZoomSign>
          <ZoomTrack><ZoomKnob /></ZoomTrack>
          <ZoomSign>+</ZoomSign>
          <ZoomPct>85 %</ZoomPct>
        </StatusRight>
      </StatusBar>
    </Page>
  );
}
